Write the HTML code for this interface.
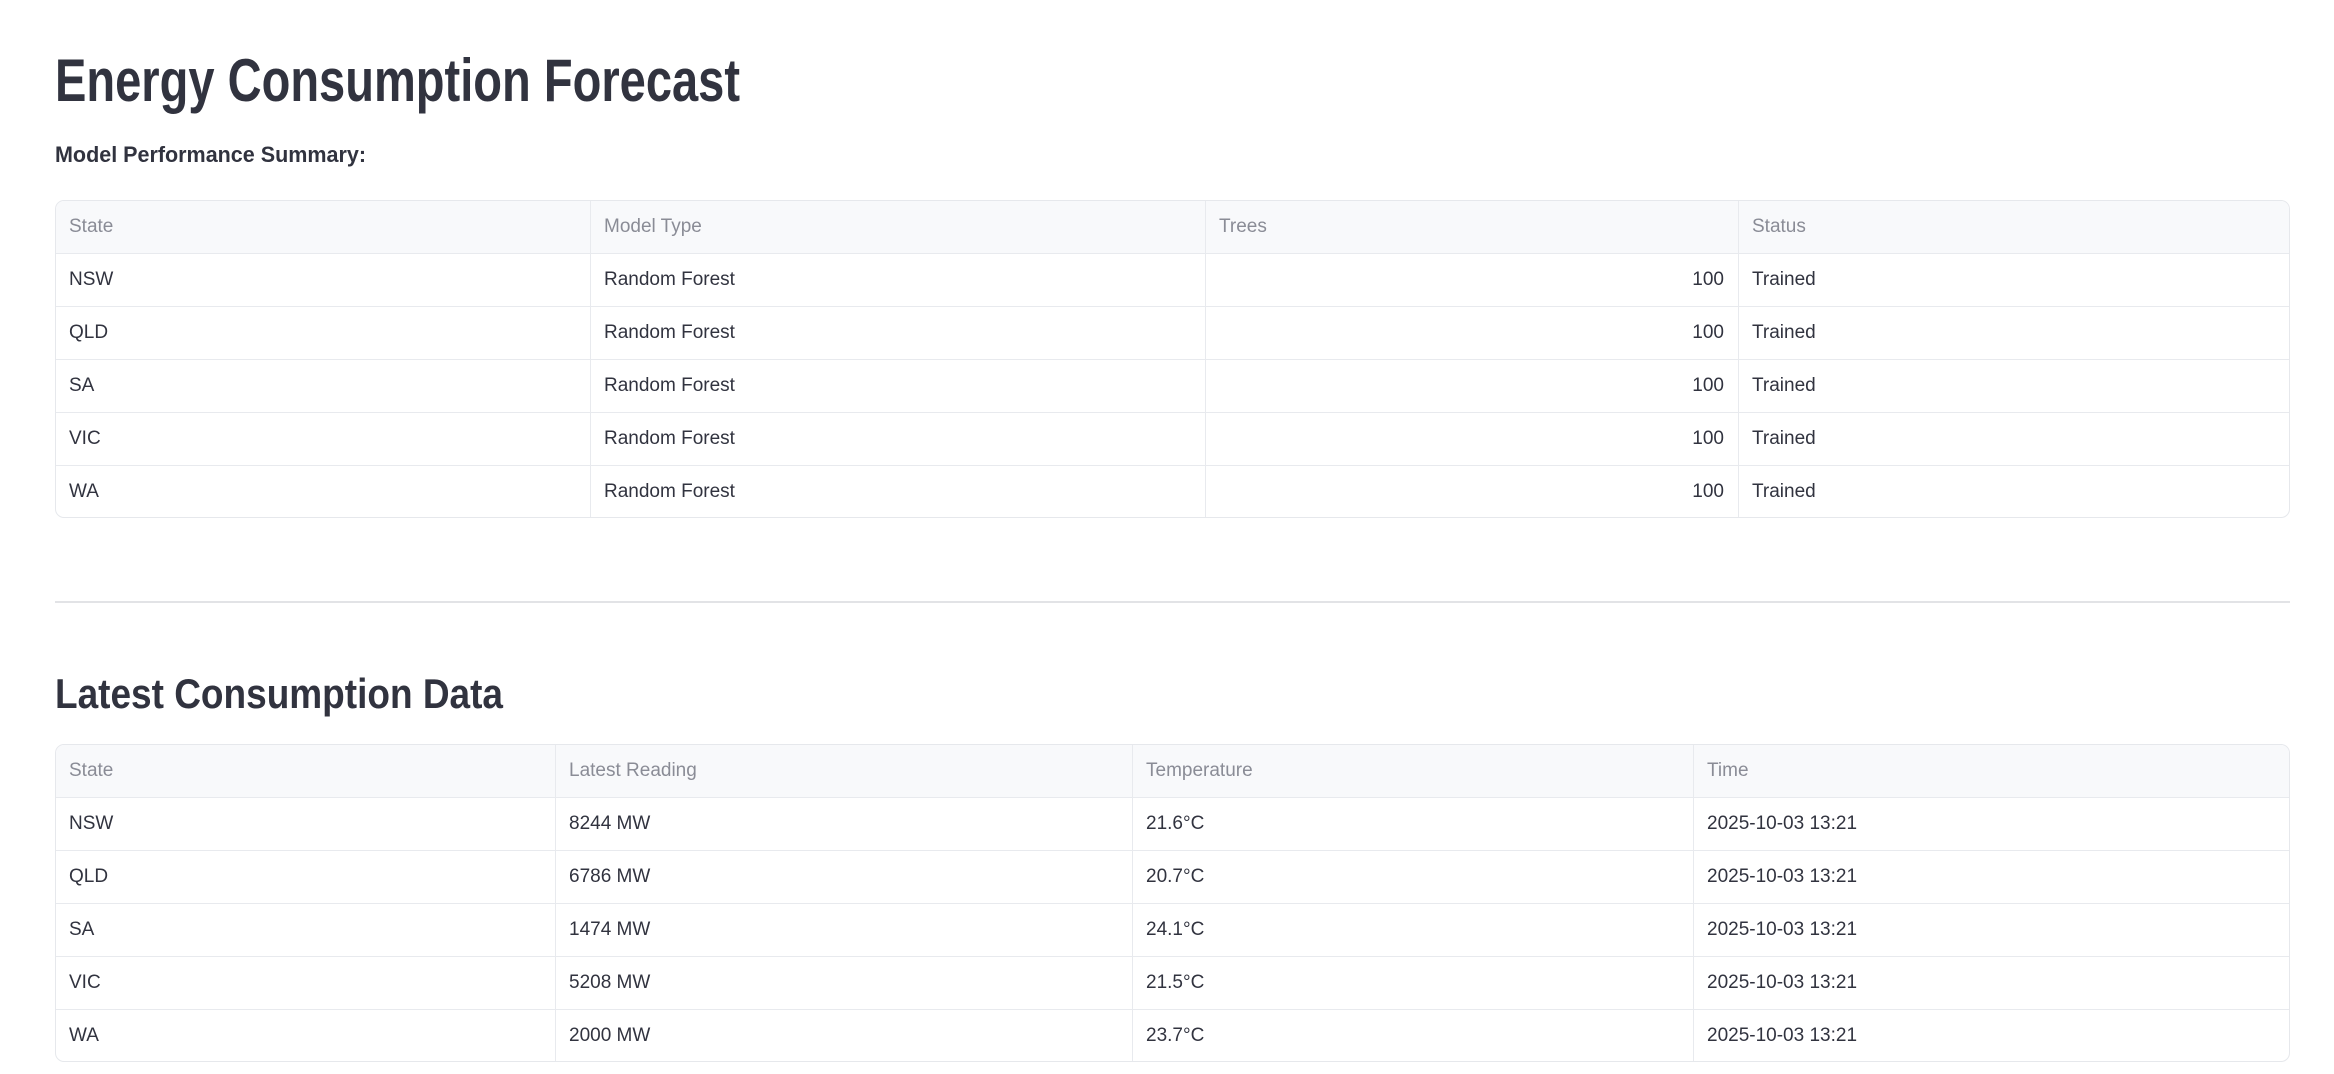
<!DOCTYPE html>
<html><head><meta charset="utf-8"><style>
html,body{margin:0;padding:0;background:#fff;width:2334px;height:1074px;overflow:hidden;font-family:"Liberation Sans",sans-serif;color:#31333f}
.abs{position:absolute}
.tbl{position:absolute;left:55px;width:2235px;border:1.5px solid #e6e8ec;border-radius:9px;overflow:hidden;box-sizing:border-box}
.row{position:absolute;left:0;right:0;height:53px;border-bottom:1.5px solid #e8eaee;box-sizing:border-box}
.row.h{background:#f8f9fb;color:#8a8c96}
.c{position:absolute;top:0;height:100%;line-height:51px;font-size:19px;padding-left:13px;box-sizing:border-box;border-right:1.5px solid #e8eaee;white-space:nowrap}
.r{text-align:right;padding-right:14px}
</style></head><body>
<svg class="abs" style="left:0;top:0" width="2334" height="740">
<text x="55" y="101" font-family="Liberation Sans" font-weight="bold" font-size="60" fill="#31333f" textLength="685" lengthAdjust="spacingAndGlyphs">Energy Consumption Forecast</text>
<text x="55" y="162" font-family="Liberation Sans" font-weight="bold" font-size="22" fill="#31333f" textLength="311" lengthAdjust="spacingAndGlyphs">Model Performance Summary:</text>
<rect x="55" y="601" width="2235" height="2" fill="#e2e3e6"/>
<text x="55" y="708" font-family="Liberation Sans" font-weight="bold" font-size="42" fill="#31333f" textLength="448" lengthAdjust="spacingAndGlyphs">Latest Consumption Data</text>
</svg>

<div class="tbl" style="top:200px;height:318px">
<div class="row h" style="top:0"><div class="c" style="left:0;width:535px">State</div><div class="c" style="left:535px;width:615px">Model Type</div><div class="c" style="left:1150px;width:533px">Trees</div><div class="c" style="left:1683px;width:560px;border:0">Status</div></div>
<div class="row" style="top:53px"><div class="c" style="left:0;width:535px">NSW</div><div class="c" style="left:535px;width:615px">Random Forest</div><div class="c r" style="left:1150px;width:533px">100</div><div class="c" style="left:1683px;width:560px;border:0">Trained</div></div>
<div class="row" style="top:106px"><div class="c" style="left:0;width:535px">QLD</div><div class="c" style="left:535px;width:615px">Random Forest</div><div class="c r" style="left:1150px;width:533px">100</div><div class="c" style="left:1683px;width:560px;border:0">Trained</div></div>
<div class="row" style="top:159px"><div class="c" style="left:0;width:535px">SA</div><div class="c" style="left:535px;width:615px">Random Forest</div><div class="c r" style="left:1150px;width:533px">100</div><div class="c" style="left:1683px;width:560px;border:0">Trained</div></div>
<div class="row" style="top:212px"><div class="c" style="left:0;width:535px">VIC</div><div class="c" style="left:535px;width:615px">Random Forest</div><div class="c r" style="left:1150px;width:533px">100</div><div class="c" style="left:1683px;width:560px;border:0">Trained</div></div>
<div class="row" style="top:265px;border:0"><div class="c" style="left:0;width:535px">WA</div><div class="c" style="left:535px;width:615px">Random Forest</div><div class="c r" style="left:1150px;width:533px">100</div><div class="c" style="left:1683px;width:560px;border:0">Trained</div></div>
</div>

<div class="tbl" style="top:744px;height:318px">
<div class="row h" style="top:0"><div class="c" style="left:0;width:500px">State</div><div class="c" style="left:500px;width:577px">Latest Reading</div><div class="c" style="left:1077px;width:561px">Temperature</div><div class="c" style="left:1638px;width:600px;border:0">Time</div></div>
<div class="row" style="top:53px"><div class="c" style="left:0;width:500px">NSW</div><div class="c" style="left:500px;width:577px">8244 MW</div><div class="c" style="left:1077px;width:561px">21.6°C</div><div class="c" style="left:1638px;width:600px;border:0">2025-10-03 13:21</div></div>
<div class="row" style="top:106px"><div class="c" style="left:0;width:500px">QLD</div><div class="c" style="left:500px;width:577px">6786 MW</div><div class="c" style="left:1077px;width:561px">20.7°C</div><div class="c" style="left:1638px;width:600px;border:0">2025-10-03 13:21</div></div>
<div class="row" style="top:159px"><div class="c" style="left:0;width:500px">SA</div><div class="c" style="left:500px;width:577px">1474 MW</div><div class="c" style="left:1077px;width:561px">24.1°C</div><div class="c" style="left:1638px;width:600px;border:0">2025-10-03 13:21</div></div>
<div class="row" style="top:212px"><div class="c" style="left:0;width:500px">VIC</div><div class="c" style="left:500px;width:577px">5208 MW</div><div class="c" style="left:1077px;width:561px">21.5°C</div><div class="c" style="left:1638px;width:600px;border:0">2025-10-03 13:21</div></div>
<div class="row" style="top:265px;border:0"><div class="c" style="left:0;width:500px">WA</div><div class="c" style="left:500px;width:577px">2000 MW</div><div class="c" style="left:1077px;width:561px">23.7°C</div><div class="c" style="left:1638px;width:600px;border:0">2025-10-03 13:21</div></div>
</div>
</body></html>
